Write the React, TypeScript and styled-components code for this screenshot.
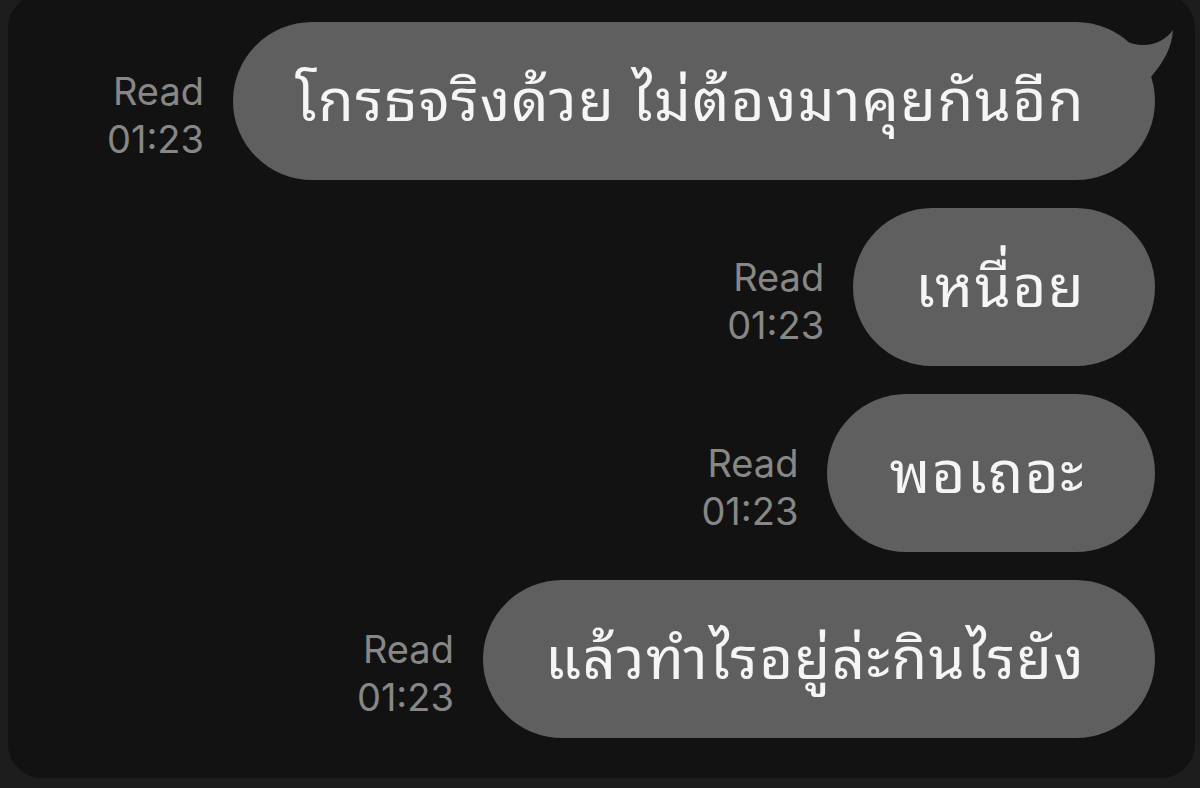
import React from 'react';
import styled, { createGlobalStyle } from 'styled-components';

const GlobalStyle = createGlobalStyle`
    html, body {
        margin: 0;
        padding: 0;
        background-color: #1d1d1d;
    }
`;

const Page = styled.div`
    width: 1200px;
    height: 788px;
    padding: 0 5px 10px 8px;
    box-sizing: border-box;
    overflow: hidden;
`;

const Card = styled.div`
    display: flex;
    flex-direction: column;
    align-items: flex-end;
    row-gap: 28px;
    height: 784px;
    margin-top: -6px;
    padding: 28px 40px 0 0;
    box-sizing: border-box;
    border-radius: 34px;
    background-color: #121212;
`;

const Row = styled.div`
    display: flex;
    align-items: center;
    column-gap: 29px;
`;

const Status = styled.div`
    padding-top: 28px;
    text-align: right;
    font-family: Inter, "Liberation Sans", sans-serif;
    font-size: 38px;
    line-height: 48px;
    color: #878787;
`;

const Bubble = styled.div`
    position: relative;
    display: flex;
    align-items: center;
    height: 158px;
    padding: 0 70px 14px 62px;
    box-sizing: border-box;
    border-radius: 79px;
    background-color: #5f5f5f;
    font-family: "Noto Sans Thai Looped", "Noto Sans Thai", Loma, Garuda, "Tlwg Typo", "Noto Sans", sans-serif;
    font-size: 58px;
    letter-spacing: 1.5px;
    color: #f5f5f5;
    white-space: nowrap;
`;

const Tail = styled.svg`
    position: absolute;
    top: 0;
    right: -20px;
    width: 60px;
    height: 70px;
`;

type Message = {
    text: string,
    time: string,
    tail?: boolean
};

const messages: Message[] = [
    { text: 'โกรธจริงด้วย ไม่ต้องมาคุยกันอีก', time: '01:23', tail: true },
    { text: 'เหนื่อย', time: '01:23' },
    { text: 'พอเถอะ', time: '01:23' },
    { text: 'แล้วทำไรอยู่ล่ะกินไรยัง', time: '01:23' },
];

const App = () => {
    return (
        <Page>
            <GlobalStyle />
            <Card>
                {messages.map((message, index) => (
                    <Row key={index}>
                        <Status>
                            Read
                            <br />
                            {message.time}
                        </Status>
                        <Bubble>
                            {message.text}
                            {message.tail && (
                                <Tail viewBox="0 0 60 70">
                                    <path d="M8 18 C28 28 48 22 58 8 C57 25 49 40 35 56 L0 62 L0 18 Z" fill="#5f5f5f" />
                                </Tail>
                            )}
                        </Bubble>
                    </Row>
                ))}
            </Card>
        </Page>
    );
};

export default App;
